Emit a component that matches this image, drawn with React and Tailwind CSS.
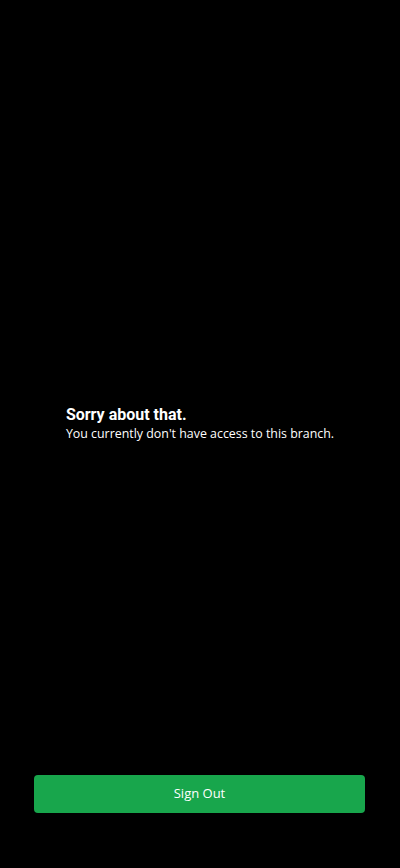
export default function App() {
  return (
    <div className="h-[868px] w-full bg-black flex flex-col">
      <div className="flex-1 flex justify-center pt-[405px]">
        <div className="flex flex-col">
          <div className="text-white text-[16px] leading-[20px] font-bold" style={{ fontFamily: "Roboto, sans-serif" }}>
            Sorry about that.
          </div>
          <div className="text-white text-[12.4px] leading-[18px]" style={{ fontFamily: "'Open Sans', sans-serif" }}>
            You currently don't have access to this branch.
          </div>
        </div>
      </div>
      <div className="pl-[34px] pr-[35px] pb-[55px]">
        <button className="w-full h-[38px] rounded-[4px] bg-[#18a64c] text-white text-[13px]" style={{ fontFamily: "'Open Sans', sans-serif" }}>
          Sign Out
        </button>
      </div>
    </div>
  );
}
